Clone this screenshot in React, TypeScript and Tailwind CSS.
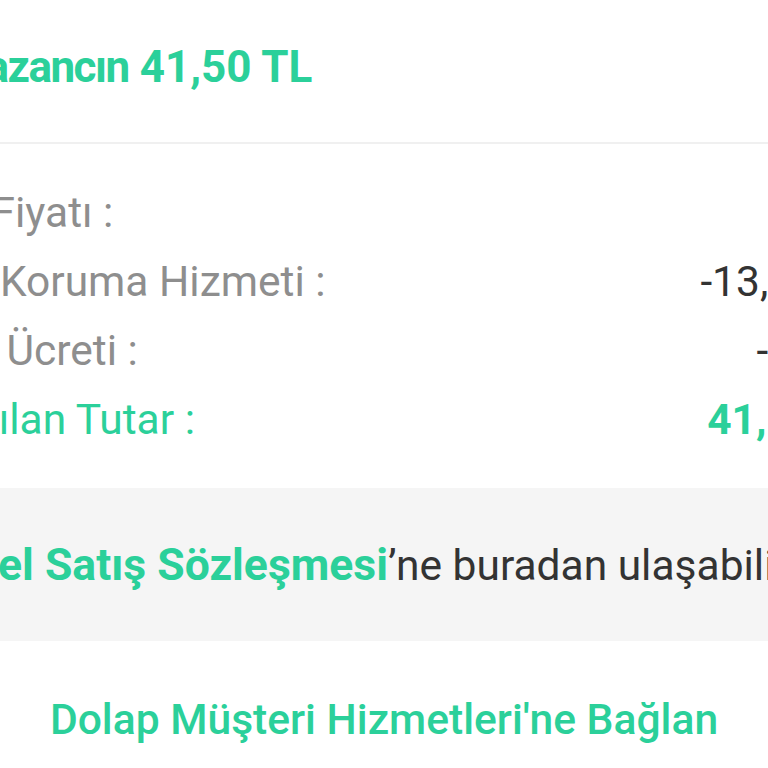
export default function App() {
  const rows = [
    { label: "Ürün Fiyatı :", value: "65 TL", shift: "-ml-[108px]", tone: "text-[#8e8e8e]", valueTone: "text-[#333333]" },
    { label: "Alıcı Koruma Hizmeti :", value: "-13,50 TL", shift: "-ml-[92px]", tone: "text-[#8e8e8e]", valueTone: "text-[#333333]" },
    { label: "Kargo Ücreti :", value: "-10 TL", shift: "-ml-[116px]", tone: "text-[#8e8e8e]", valueTone: "text-[#333333]" },
    { label: "Aktarılan Tutar :", value: "41,50 TL", shift: "-ml-[102px]", tone: "text-[#2bd09a]", valueTone: "text-[#2bd09a] font-bold" },
  ]

  return (
    <div className="h-[768px] w-[768px] overflow-hidden bg-white font-['Roboto',sans-serif]">
      {/* Header */}
      <div className="h-[144px] border-b-2 border-[#f0f0f0] pt-[41px]">
        <div className="-ml-[41px] whitespace-nowrap text-[44px] font-bold leading-[52px] text-[#2bd09a]">
          <span className="tracking-[-1.5px]">Kazancın</span> 41,50 TL
        </div>
      </div>

      {/* Breakdown */}
      <div className="pt-[34px]">
        {rows.map((row) => (
          <div key={row.label} className="-mr-[106px] flex items-center justify-between whitespace-nowrap text-[42.5px] leading-[69px]">
            <span className={`${row.shift} ${row.tone}`}>{row.label}</span>
            <span className={row.valueTone}>{row.value}</span>
          </div>
        ))}
      </div>

      {/* Contract note */}
      <div className="mt-[34px] h-[153px] bg-[#f5f5f5] pt-[55px]">
        <div className="-ml-[127px] whitespace-nowrap text-[42.5px] leading-[44px] text-[#333333]">
          <span className="text-[44.5px] font-bold leading-[44px] text-[#2bd09a]">Bireysel Satış Sözleşmesi</span>’ne buradan ulaşabilirsin.
        </div>
      </div>

      {/* Customer service */}
      <div className="pt-[56px] text-center">
        <span className="whitespace-nowrap text-[42.6px] font-medium leading-[44px] text-[#2bd09a]">
          Dolap Müşteri Hizmetleri'ne Bağlan
        </span>
      </div>
    </div>
  )
}
